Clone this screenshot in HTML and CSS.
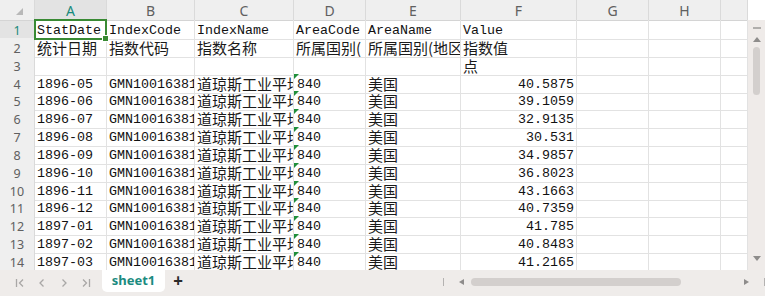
FILE: index.html
```html
<!DOCTYPE html>
<html lang="zh-CN">
  <head>
    <meta charset="UTF-8" />
    <meta name="viewport" content="width=device-width, initial-scale=1.0" />
    <title>sheet1</title>
    <link rel="stylesheet" href="styles.css">
  </head>
  <body>
    <main class="book">
      <div class="sheet-area">
        <div class="grid">
          <div class="row head">
            <div class="corner"><span class="corner-mark"></span></div>
            <div class="ch active">A</div>
            <div class="ch">B</div>
            <div class="ch">C</div>
            <div class="ch">D</div>
            <div class="ch">E</div>
            <div class="ch">F</div>
            <div class="ch">G</div>
            <div class="ch">H</div>
            <div class="ch"></div>
          </div>
          <div class="row">
            <div class="rh active">1</div>
            <div class="c selected">StatDate</div>
            <div class="c">IndexCode</div>
            <div class="c">IndexName</div>
            <div class="c">AreaCode</div>
            <div class="c">AreaName</div>
            <div class="c">Value</div>
            <div class="c"></div><div class="c"></div><div class="c"></div>
          </div>
          <div class="row">
            <div class="rh">2</div>
            <div class="c zh">统计日期</div>
            <div class="c zh">指数代码</div>
            <div class="c zh">指数名称</div>
            <div class="c zh">所属国别(</div>
            <div class="c zh">所属国别(地区</div>
            <div class="c zh">指数值</div>
            <div class="c"></div><div class="c"></div><div class="c"></div>
          </div>
          <div class="row">
            <div class="rh">3</div>
            <div class="c"></div><div class="c"></div><div class="c"></div><div class="c"></div><div class="c"></div>
            <div class="c zh">点</div>
            <div class="c"></div><div class="c"></div><div class="c"></div>
          </div>
          <div class="row">
            <div class="rh">4</div>
            <div class="c">1896-05</div><div class="c">GMN10016381</div><div class="c zh">道琼斯工业平均</div>
            <div class="c txt">840</div><div class="c zh">美国</div><div class="c num">40.5875</div>
            <div class="c"></div><div class="c"></div><div class="c"></div>
          </div>
          <div class="row">
            <div class="rh">5</div>
            <div class="c">1896-06</div><div class="c">GMN10016381</div><div class="c zh">道琼斯工业平均</div>
            <div class="c txt">840</div><div class="c zh">美国</div><div class="c num">39.1059</div>
            <div class="c"></div><div class="c"></div><div class="c"></div>
          </div>
          <div class="row">
            <div class="rh">6</div>
            <div class="c">1896-07</div><div class="c">GMN10016381</div><div class="c zh">道琼斯工业平均</div>
            <div class="c txt">840</div><div class="c zh">美国</div><div class="c num">32.9135</div>
            <div class="c"></div><div class="c"></div><div class="c"></div>
          </div>
          <div class="row">
            <div class="rh">7</div>
            <div class="c">1896-08</div><div class="c">GMN10016381</div><div class="c zh">道琼斯工业平均</div>
            <div class="c txt">840</div><div class="c zh">美国</div><div class="c num">30.531</div>
            <div class="c"></div><div class="c"></div><div class="c"></div>
          </div>
          <div class="row">
            <div class="rh">8</div>
            <div class="c">1896-09</div><div class="c">GMN10016381</div><div class="c zh">道琼斯工业平均</div>
            <div class="c txt">840</div><div class="c zh">美国</div><div class="c num">34.9857</div>
            <div class="c"></div><div class="c"></div><div class="c"></div>
          </div>
          <div class="row">
            <div class="rh">9</div>
            <div class="c">1896-10</div><div class="c">GMN10016381</div><div class="c zh">道琼斯工业平均</div>
            <div class="c txt">840</div><div class="c zh">美国</div><div class="c num">36.8023</div>
            <div class="c"></div><div class="c"></div><div class="c"></div>
          </div>
          <div class="row">
            <div class="rh">10</div>
            <div class="c">1896-11</div><div class="c">GMN10016381</div><div class="c zh">道琼斯工业平均</div>
            <div class="c txt">840</div><div class="c zh">美国</div><div class="c num">43.1663</div>
            <div class="c"></div><div class="c"></div><div class="c"></div>
          </div>
          <div class="row">
            <div class="rh">11</div>
            <div class="c">1896-12</div><div class="c">GMN10016381</div><div class="c zh">道琼斯工业平均</div>
            <div class="c txt">840</div><div class="c zh">美国</div><div class="c num">40.7359</div>
            <div class="c"></div><div class="c"></div><div class="c"></div>
          </div>
          <div class="row">
            <div class="rh">12</div>
            <div class="c">1897-01</div><div class="c">GMN10016381</div><div class="c zh">道琼斯工业平均</div>
            <div class="c txt">840</div><div class="c zh">美国</div><div class="c num">41.785</div>
            <div class="c"></div><div class="c"></div><div class="c"></div>
          </div>
          <div class="row">
            <div class="rh">13</div>
            <div class="c">1897-02</div><div class="c">GMN10016381</div><div class="c zh">道琼斯工业平均</div>
            <div class="c txt">840</div><div class="c zh">美国</div><div class="c num">40.8483</div>
            <div class="c"></div><div class="c"></div><div class="c"></div>
          </div>
          <div class="row">
            <div class="rh">14</div>
            <div class="c">1897-03</div><div class="c">GMN10016381</div><div class="c zh">道琼斯工业平均</div>
            <div class="c txt">840</div><div class="c zh">美国</div><div class="c num">41.2165</div>
            <div class="c"></div><div class="c"></div><div class="c"></div>
          </div>
        </div>
        <div class="vscroll">
          <span class="vs-cap"></span>
          <span class="arrow up"></span>
          <span class="vs-thumb"></span>
          <span class="vs-space"></span>
          <span class="arrow down"></span>
        </div>
      </div>
      <div class="tabbar">
        <div class="nav">
          <svg width="10" height="10" viewBox="0 0 10 10"><path d="M1.5 1v8M8 1.5 4.5 5 8 8.5" /></svg>
          <svg width="10" height="10" viewBox="0 0 10 10"><path d="M6.5 1.5 3 5l3.5 3.5" /></svg>
          <svg width="10" height="10" viewBox="0 0 10 10"><path d="M3.5 1.5 7 5 3.5 8.5" /></svg>
          <svg width="10" height="10" viewBox="0 0 10 10"><path d="M2 1.5 5.5 5 2 8.5M8.5 1v8" /></svg>
        </div>
        <div class="tab">sheet1</div>
        <div class="add">+</div>
        <div class="hscroll">
          <span class="sep"></span>
          <span class="arrow left"></span>
          <span class="hs-thumb"></span>
          <span class="hs-space"></span>
          <span class="arrow right"></span>
          <span class="sep"></span>
        </div>
      </div>
    </main>
  </body>
</html>
```

FILE: styles.css
```css
* {
  box-sizing: border-box;
}

body {
  margin: 0;
  background: #ffffff;
  font-family: "Liberation Mono", "Noto Sans CJK SC", monospace;
}

.book {
  width: 765px;
  height: 296px;
  overflow: hidden;
}

.sheet-area {
  display: flex;
  height: 270px;
  overflow: hidden;
}

.grid {
  width: 748px;
  overflow: hidden;
}

.row {
  display: grid;
  grid-template-columns: 35px 72px 88px 99px 72px 95px 116px 72px 72px 27px;
  height: 17.85px;
}

.row.head {
  height: 20px;
}

.corner,
.ch,
.rh {
  background: #efefef;
  color: #606060;
  font-family: "Noto Sans", sans-serif;
  font-size: 13px;
  border-right: 1px solid #dadada;
  border-bottom: 1px solid #d4d4d4;
  display: flex;
  align-items: center;
  justify-content: center;
}

.ch {
  font-size: 14px;
  padding-top: 1px;
}

.corner {
  position: relative;
}

.corner-mark {
  position: absolute;
  right: 11px;
  bottom: 5px;
  border-left: 7px solid transparent;
  border-bottom: 7px solid #b8b8b8;
}

.ch.active,
.rh.active {
  background: #e3e3e3;
  color: #178a7c;
}

.rh {
  font-size: 12.5px;
  padding-top: 2px;
  border-bottom-color: #dcdcdc;
}

.c {
  position: relative;
  border-right: 1px solid #e2e2e2;
  border-bottom: 1px solid #e2e2e2;
  font-size: 13.33px;
  line-height: 14px;
  color: #111;
  padding: 0 2px 1px;
  white-space: nowrap;
  overflow: hidden;
  display: flex;
  align-items: flex-end;
}

.c.zh {
  font-family: "Noto Sans CJK SC", sans-serif;
  font-size: 15px;
  line-height: 16px;
  color: #1a1a1a;
}

.c.num {
  justify-content: flex-end;
}

.c.txt {
  padding-left: 3px;
}

.c.txt::before {
  content: "";
  position: absolute;
  left: 0;
  top: 0;
  border-top: 5px solid #1f8f3a;
  border-right: 5px solid transparent;
}

.c.selected {
  overflow: visible;
}

.c.selected::after {
  content: "";
  position: absolute;
  left: -1px;
  top: -1px;
  right: -1px;
  bottom: -1px;
  border: 2px solid #398a34;
  pointer-events: none;
}

.c.selected::before {
  content: "";
  position: absolute;
  right: -3px;
  bottom: -3px;
  width: 5px;
  height: 5px;
  background: #398a34;
  border: 1px solid #ffffff;
  z-index: 1;
}

.vscroll {
  width: 17px;
  margin-top: 20px;
  background: #efebe9;
  display: flex;
  flex-direction: column;
  align-items: center;
  padding-top: 7px;
}

.vs-cap {
  width: 8px;
  height: 2px;
  background: #b0aeac;
}

.arrow {
  width: 0;
  height: 0;
}

.arrow.up {
  margin-top: 8px;
  border-left: 4px solid transparent;
  border-right: 4px solid transparent;
  border-bottom: 5px solid #8e8c8b;
}

.vs-thumb {
  margin-top: 5px;
  width: 7px;
  height: 48px;
  border-radius: 4px;
  background: #d3cfcd;
}

.vs-space {
  flex: 1;
}

.arrow.down {
  margin-bottom: 9px;
  border-left: 4px solid transparent;
  border-right: 4px solid transparent;
  border-top: 5px solid #8e8c8b;
}

.tabbar {
  height: 26px;
  background: #efecea;
  display: flex;
  align-items: flex-start;
}

.nav {
  display: flex;
  gap: 12px;
  padding: 8px 0 0 15px;
  width: 102px;
}

.nav svg {
  fill: none;
  stroke: #a9a7a6;
  stroke-width: 1.3;
}

.tab {
  width: 63px;
  height: 22px;
  background: #ffffff;
  border-radius: 0 0 5px 5px;
  color: #1b8b80;
  font-family: "Noto Sans", sans-serif;
  font-weight: 700;
  font-size: 13px;
  display: flex;
  align-items: center;
  justify-content: center;
  padding-bottom: 2px;
}

.add {
  margin-left: 6px;
  width: 14px;
  font-family: "Noto Sans", sans-serif;
  font-weight: 700;
  font-size: 17px;
  line-height: 22px;
  color: #2a2a2a;
  text-align: center;
}

.hscroll {
  margin-left: auto;
  width: 322px;
  height: 26px;
  display: flex;
  align-items: center;
  padding-bottom: 2px;
}

.sep {
  width: 1px;
  height: 8px;
  background: #b4b2b1;
}

.arrow.left {
  margin-left: 15px;
  border-top: 3px solid transparent;
  border-bottom: 3px solid transparent;
  border-right: 5px solid #8e8c8b;
}

.hs-thumb {
  margin-left: 7px;
  width: 210px;
  height: 8px;
  border-radius: 4px;
  background: #d3cfcd;
}

.hs-space {
  flex: 1;
}

.arrow.right {
  margin-right: 15px;
  border-top: 3px solid transparent;
  border-bottom: 3px solid transparent;
  border-left: 5px solid #8e8c8b;
}
```
